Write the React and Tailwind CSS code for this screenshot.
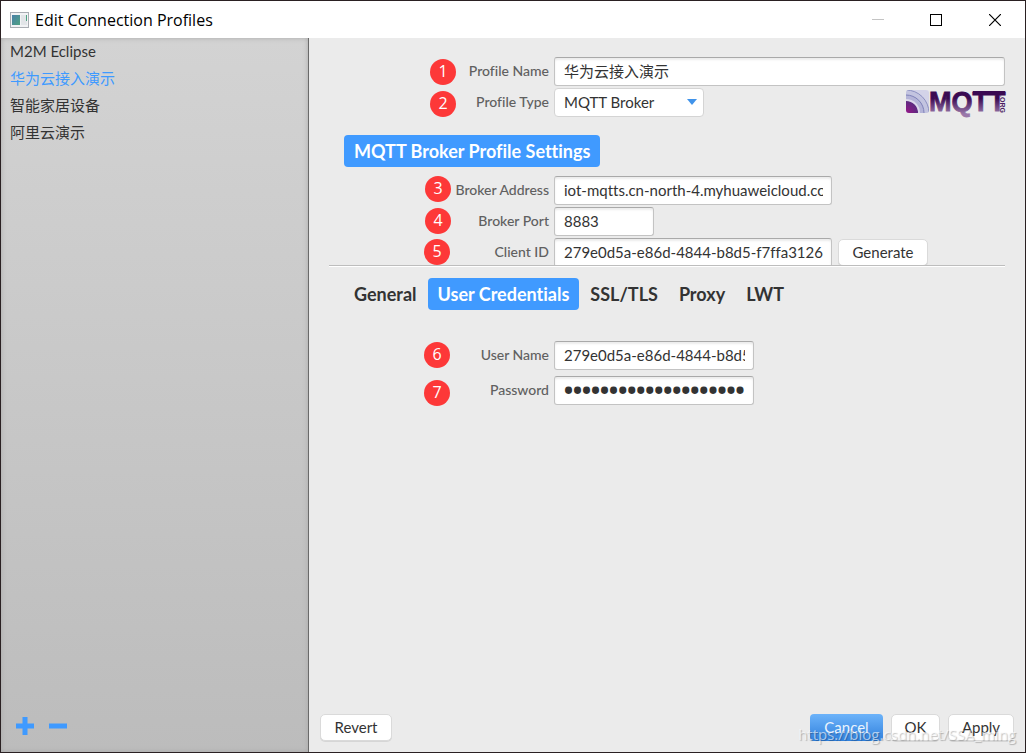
import React, { useState } from "react";

const profiles = ["M2M Eclipse", "华为云接入演示", "智能家居设备", "阿里云演示"];
const tabs = ["General", "User Credentials", "SSL/TLS", "Proxy", "LWT"];

const inputClass =
  "h-[29px] min-w-0 rounded-[3px] border border-[#c3c3c3] border-t-[#a9a9a9] bg-white pb-[2px] pl-[9px] pr-2 text-[#333] shadow-[inset_0_2px_2px_#ececec] focus:outline-none";
const buttonClass =
  "h-[27px] rounded-[5px] border border-[#dadada] bg-white pb-[2px] text-center text-[#333] shadow-[0_1px_0_#d6d6d6]";

// Numbered red marker, sits beside the label
const Badge = ({ n, className }) => (
  <span
    className={`absolute flex h-[26px] w-[26px] items-center justify-center rounded-full bg-[#fd3838] pb-[2px] font-['Open_Sans','Noto_Sans',sans-serif] text-[16px] text-white ${className}`}
  >
    {n}
  </span>
);

const Row = ({ n, id, label, badge, children }) => (
  <div className="relative flex items-center gap-[5px]">
    <Badge n={n} className={badge} />
    <label
      htmlFor={id}
      className="w-[220px] shrink-0 pb-[2px] text-right text-[14px] font-medium text-[#606060]"
    >
      {label}
    </label>
    {children}
  </div>
);

const MqttLogo = () => (
  <svg width="99" height="24" viewBox="0 0 99 24" aria-label="MQTT.org" className="mt-[2px] shrink-0 overflow-visible">
    <defs>
      <linearGradient id="ink" gradientUnits="userSpaceOnUse" x1="0" y1="0" x2="0" y2="24">
        <stop offset="0.35" stopColor="#3a0a52" />
        <stop offset="1" stopColor="#9a78aa" />
      </linearGradient>
      <radialGradient id="core">
        <stop offset="0.2" stopColor="#8d1a86" />
        <stop offset="1" stopColor="#5c2a80" />
      </radialGradient>
      <clipPath id="tileClip">
        <rect x="0" y="0" width="23" height="23" rx="3" />
      </clipPath>
    </defs>
    <g clipPath="url(#tileClip)">
      <rect width="23" height="23" fill="#d3d3e8" />
      <circle cx="0" cy="23" r="23" fill="#c3c4e0" stroke="#8c90c0" />
      <circle cx="0" cy="23" r="18" fill="#b4b4d8" stroke="#7f82b8" />
      <circle cx="0" cy="23" r="14" fill="#dcd8ec" />
      <circle cx="0" cy="23" r="12" fill="url(#core)" />
    </g>
    <text
      x="23"
      y="21"
      fill="url(#ink)"
      stroke="url(#ink)"
      strokeWidth="0.8"
      fontFamily="Liberation Sans, Arial, sans-serif"
      fontWeight="bold"
      fontSize="27"
    >
      MQTT
    </text>
    <path d="M67 1h32v4H67z" fill="#3a0a52" />
    <text
      transform="translate(94 5) rotate(90)"
      fontFamily="Liberation Sans, Arial, sans-serif"
      fontWeight="bold"
      fontSize="7"
      fill="#4a1a63"
    >
      .ORG
    </text>
  </svg>
);

const TitleBar = () => (
  <header className="flex h-[37px] shrink-0 items-center bg-white pl-[9px]">
    <svg width="19" height="16" viewBox="0 0 19 16" className="mr-[6px]">
      <defs>
        <linearGradient id="app" x1="0" y1="0" x2="1" y2="1">
          <stop offset="0" stopColor="#4a80a8" />
          <stop offset="1" stopColor="#4fa282" />
        </linearGradient>
      </defs>
      <rect x="0.5" y="0.5" width="18" height="15" fill="#f2f3f5" stroke="#a9adb3" />
      <rect x="2" y="3" width="8" height="10" fill="url(#app)" />
      <rect x="11" y="3" width="6" height="10" fill="#e2e5e8" />
      <rect x="16" y="3" width="1" height="6" fill="#4fa282" />
    </svg>
    <h1 className="flex-1 font-['Open_Sans','Noto_Sans',sans-serif] text-[16px] text-black">
      Edit Connection Profiles
    </h1>
    <button aria-label="Minimize" className="flex h-full w-[58px] items-center justify-center">
      <svg width="12" height="12" viewBox="0 0 12 12">
        <path d="M0 5.5h12" stroke="#c4c4c4" />
      </svg>
    </button>
    <button aria-label="Maximize" className="flex h-full w-[58px] items-center justify-center">
      <svg width="12" height="12" viewBox="0 0 12 12">
        <rect x="0.5" y="0.5" width="11" height="11" fill="none" stroke="#000" />
      </svg>
    </button>
    <button aria-label="Close" className="flex h-full w-[60px] items-center justify-center">
      <svg width="12" height="12" viewBox="0 0 12 12">
        <path d="M0 0l12 12M12 0L0 12" stroke="#000" strokeWidth="1.2" />
      </svg>
    </button>
  </header>
);

const App = () => {
  const [selected, setSelected] = useState(1);
  const [tab, setTab] = useState("User Credentials");
  const [form, setForm] = useState({
    name: "华为云接入演示",
    address: "iot-mqtts.cn-north-4.myhuaweicloud.com",
    port: "8883",
    clientId: "279e0d5a-e86d-4844-b8d5-f7ffa3126a41",
    user: "279e0d5a-e86d-4844-b8d5-f7ffa3126a41",
    password: "abcdefghijklmnopqrst",
  });

  // Handle input change
  const handleChange = (e) => {
    setForm({ ...form, [e.target.name]: e.target.value });
  };

  return (
    <div className="relative flex h-screen flex-col overflow-hidden border border-[#2a2022] font-['Lato','Noto_Sans_CJK_SC',sans-serif] text-[15px] leading-5 text-[#333] [font-variant-ligatures:none]">
      <TitleBar />

      <div className="flex min-h-0 flex-1">
        {/* Profile list */}
        <aside className="flex w-[308px] shrink-0 flex-col border-r border-[#6a6a6a] bg-linear-to-b from-[#d3d3d3] to-[#bcbcbc] shadow-[inset_0_0_5px_#a8a8a8]">
          <ul className="flex-1">
            {profiles.map((p, i) => (
              <li key={p}>
                <button
                  onClick={() => setSelected(i)}
                  className={`block h-[27px] w-full pb-[2px] pl-[9px] text-left ${
                    i === selected ? "text-[#3f9aff]" : "text-[#333]"
                  }`}
                >
                  {p}
                </button>
              </li>
            ))}
          </ul>
          <div className="flex gap-[15px] pb-[17px] pl-[15px]">
            <button aria-label="Add profile">
              <svg width="18" height="18" viewBox="0 0 18 18">
                <path d="M9 0v18M0 9h18" stroke="#3f9aff" strokeWidth="5" />
              </svg>
            </button>
            <button aria-label="Remove profile">
              <svg width="18" height="18" viewBox="0 0 18 18">
                <path d="M0 9h18" stroke="#3f9aff" strokeWidth="5" />
              </svg>
            </button>
          </div>
        </aside>

        {/* Profile form */}
        <main className="flex min-w-0 flex-1 flex-col bg-[#ebebeb]">
          <div className="flex-1 pl-5 pr-5 pt-[19px]">
            <div className="flex flex-col gap-[2px]">
              <Row n="1" id="name" label="Profile Name" badge="left-[101px] top-[2px]">
                <input id="name" name="name" value={form.name} onChange={handleChange} className={`${inputClass} flex-1`} />
              </Row>
              <div className="flex items-start justify-between">
                <Row n="2" id="type" label="Profile Type" badge="left-[101px] top-[3px]">
                  <div className="relative">
                    <select
                      id="type"
                      className="h-[29px] w-[150px] appearance-none rounded-[4px] border border-[#d4d4d4] bg-white pb-[2px] pl-[9px] text-[#333]"
                    >
                      <option>MQTT Broker</option>
                    </select>
                    <svg
                      width="10"
                      height="6"
                      viewBox="0 0 10 6"
                      className="pointer-events-none absolute right-[7px] top-[11px]"
                    >
                      <path d="M0 0h10L5 6z" fill="#4093ea" />
                    </svg>
                  </div>
                </Row>
                <MqttLogo />
              </div>
            </div>

            <h2 className="ml-[15px] mt-[18px] w-fit rounded-[4px] bg-[#409aff] px-[10px] py-[6px] text-[18px] font-bold text-white">
              MQTT Broker Profile Settings
            </h2>

            <section className="mt-[9px] flex h-[90px] flex-col justify-start gap-[2px] overflow-hidden border-b border-[#bdbdbd] shadow-[0_1px_0_#fff]">
              <Row n="3" id="address" label="Broker Address" badge="left-[96px] top-0">
                <input id="address" name="address" value={form.address} onChange={handleChange} className={`${inputClass} w-[278px]`} />
              </Row>
              <Row n="4" id="port" label="Broker Port" badge="left-[96px] top-[1px]">
                <input id="port" name="port" value={form.port} onChange={handleChange} className={`${inputClass} w-[100px]`} />
              </Row>
              <Row n="5" id="clientId" label="Client ID" badge="left-[95px] top-[1px]">
                <input id="clientId" name="clientId" value={form.clientId} onChange={handleChange} className={`${inputClass} w-[278px]`} />
                <button className={`${buttonClass} ml-[1px] w-[90px]`}>Generate</button>
              </Row>
            </section>

            <nav className="ml-[15px] mt-3 flex gap-[1px] text-[18px] font-bold">
              {tabs.map((t) => (
                <button
                  key={t}
                  onClick={() => setTab(t)}
                  className={`rounded-[4px] px-[10px] py-[6px] ${
                    t === tab ? "bg-[#409aff] text-white" : "text-[#333]"
                  }`}
                >
                  {t}
                </button>
              ))}
            </nav>

            <div className="mt-[31px] flex flex-col gap-[6px]">
              <Row n="6" id="user" label="User Name" badge="left-[95px] top-[1px]">
                <input id="user" name="user" value={form.user} onChange={handleChange} className={`${inputClass} w-[200px]`} />
              </Row>
              <Row n="7" id="password" label="Password" badge="left-[95px] top-[4px]">
                <input
                  id="password"
                  name="password"
                  type="password"
                  value={form.password}
                  onChange={handleChange}
                  className={`${inputClass} w-[200px] font-['Open_Sans','Noto_Sans',sans-serif] text-[24px] [-webkit-text-stroke:2px_#333]`}
                />
              </Row>
            </div>
          </div>

          <footer className="flex gap-2 pb-[11px] pl-[11px] pr-[11px]">
            <button className={`${buttonClass} mr-auto w-[72px]`}>Revert</button>
            <button className="h-[27px] w-[73px] rounded-[4px] bg-linear-to-b from-[#6cb3fa] to-[#2f80dc] pb-[2px] text-[#eaf3fd]">
              Cancel
            </button>
            <button className={`${buttonClass} w-[49px]`}>OK</button>
            <button className={`${buttonClass} w-[66px]`}>Apply</button>
          </footer>
        </main>
      </div>

      {/* Watermark */}
      <span className="pointer-events-none absolute bottom-[8px] right-[9px] font-['Open_Sans','Noto_Sans',sans-serif] text-[15px] text-white/60 [text-shadow:1px_1px_1px_#00000040]">
        https://blog.csdn.net/SSA_ming
      </span>
    </div>
  );
};

export default App;
